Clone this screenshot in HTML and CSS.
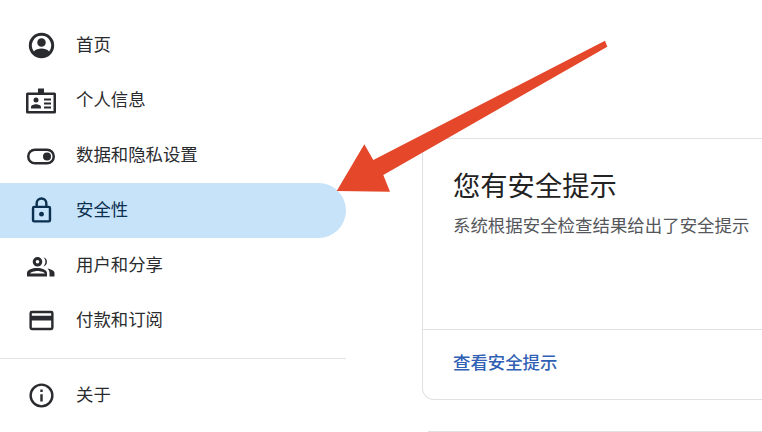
FILE: index.html
```html
<!DOCTYPE html>
<html lang="zh-CN">
<head>
    <meta charset="UTF-8">
    <meta name="viewport" content="width=device-width, initial-scale=1.0">
    <title>安全性</title>
    <link rel="stylesheet" href="styles.css">
</head>
<body>

    <div class="page">
        <!-- Sidebar -->
        <nav class="sidebar">
            <a class="nav-item">
                <svg class="nav-icon" viewBox="0 0 24 24"><path d="M12 1.500a10.500 10.500 0 1 0 0 21 10.500 10.500 0 0 0 0-21zM12 4a8 8 0 0 1 6.300 12.900C16.900 15.200 14.300 14.500 12 14.500s-4.900.7-6.300 2.400A8 8 0 0 1 12 4z"/><circle cx="12" cy="9.500" r="3.500"/></svg>
                <span>首页</span>
            </a>
            <a class="nav-item">
                <svg class="nav-icon nav-icon-wide" viewBox="0 0 30 26"><path d="M12 1h6v4h10.500a1.500 1.500 0 0 1 1.500 1.500v18a1.500 1.500 0 0 1-1.500 1.500h-27A1.500 1.500 0 0 1 0 24.500v-18A1.500 1.500 0 0 1 1.500 5H12zM2.500 7.500v16h25v-16z" fill-rule="evenodd"/><circle cx="10" cy="12.500" r="2.500"/><path d="M5 21v-1.500c0-1.800 3-2.800 5-2.800s5 1 5 2.800V21zM18 11h7v2h-7zM18 15h7v2h-7zM18 19h7v2h-7z"/></svg>
                <span>个人信息</span>
            </a>
            <a class="nav-item">
                <svg class="nav-icon nav-icon-wide" viewBox="0 0 30 18"><path d="M9 2h12a8 8 0 0 1 0 16H9A8 8 0 0 1 9 2zm0 2.500a5.500 5.500 0 0 0 0 11h12a5.500 5.500 0 0 0 0-11z" fill-rule="evenodd"/><circle cx="21" cy="10" r="4"/></svg>
                <span>数据和隐私设置</span>
            </a>
            <a class="nav-item active">
                <svg class="nav-icon" viewBox="0 0 24 24"><path d="M18 8h-1V6A5 5 0 0 0 7 6v2H6a2 2 0 0 0-2 2v10a2 2 0 0 0 2 2h12a2 2 0 0 0 2-2V10a2 2 0 0 0-2-2zM9 6a3 3 0 0 1 6 0v2H9zm9 14H6V10h12z"/><circle cx="12" cy="15" r="2"/></svg>
                <span>安全性</span>
            </a>
            <a class="nav-item">
                <svg class="nav-icon nav-icon-people" viewBox="0 0 28 20"><path d="M10.500 0a4.800 4.800 0 1 1 0 9.600 4.800 4.800 0 0 1 0-9.600zm0 3a1.800 1.800 0 1 0 0 3.600 1.800 1.800 0 0 0 0-3.600zM10.500 11c3.800 0 9.500 1.700 9.500 5v3.500H0V16c0-3.300 5.700-5 9.500-5zm0 3c-3 0-6.800 1.100-7.500 2.500h15c-.7-1.400-4.500-2.500-7.500-2.500z"/><path d="M16.500.2a4.800 4.800 0 0 1 0 9.200c1.200-1.300 1.900-2.800 1.900-4.600s-.7-3.300-1.900-4.600zM20.500 11.500c3.800.8 7 2.300 7 4.700v3.300h-5V16c0-1.800-.8-3.300-2-4.500z"/></svg>
                <span>用户和分享</span>
            </a>
            <a class="nav-item">
                <svg class="nav-icon" viewBox="0 0 24 24"><path d="M20 4H4a2 2 0 0 0-2 2v12a2 2 0 0 0 2 2h16a2 2 0 0 0 2-2V6a2 2 0 0 0-2-2zm0 14H4v-6h16zm0-10H4V6h16z"/></svg>
                <span>付款和订阅</span>
            </a>
            <hr class="nav-divider">
            <a class="nav-item">
                <svg class="nav-icon" viewBox="0 0 24 24"><path d="M12 2a10 10 0 1 0 0 20 10 10 0 0 0 0-20zm0 18a8 8 0 1 1 0-16 8 8 0 0 1 0 16zM11 11h2v6h-2zM11 7h2v2h-2z"/></svg>
                <span>关于</span>
            </a>
        </nav>

        <!-- Main content -->
        <main class="content">
            <section class="card">
                <div class="card-body">
                    <h2 class="card-title">您有安全提示</h2>
                    <p class="card-text">系统根据安全检查结果给出了安全提示</p>
                </div>
                <div class="card-footer">
                    <a class="card-link">查看安全提示</a>
                </div>
            </section>
            <div class="next-card"></div>
        </main>
    </div>

    <!-- Red annotation arrow -->
    <svg class="arrow" viewBox="0 0 762 432"><polygon points="605,40.700 607.300,46.700 383.300,175 390,191.700 336.700,191 364.300,144.300 373.300,160"/></svg>

</body>
</html>
```

FILE: styles.css
```css
body {
    font-family: "Liberation Sans", "Noto Sans CJK SC", sans-serif;
    background-color: #fff;
    color: #1f1f1f;
    margin: 0;
    height: 432px;
    overflow: hidden;
}

.page {
    display: flex;
    height: 432px;
}

.sidebar {
    width: 346px;
    flex-shrink: 0;
    padding-top: 18px;
    box-sizing: border-box;
}

.nav-item {
    display: flex;
    align-items: center;
    height: 55px;
    font-size: 17.4px;
    border-radius: 0 28px 28px 0;
    color: #2a2b2e;
}

.nav-item span {
    margin-bottom: 4px;
}

.nav-item.active {
    background-color: #c7e3fa;
    color: #0b2f4e;
}

.nav-icon {
    width: 29px;
    height: 29px;
    margin-left: 26.5px;
    margin-right: 20.5px;
    flex-shrink: 0;
    fill: currentColor;
}

.nav-icon-wide {
    width: 30px;
    margin-left: 26px;
    margin-right: 20px;
}

.nav-icon-people {
    width: 28px;
    height: 20px;
    margin-left: 27px;
    margin-right: 21px;
    margin-top: 2px;
}

.nav-divider {
    border: none;
    border-top: 1px solid #e2e3e5;
    margin: 10px 0 9px;
}

.content {
    flex: 1;
    min-width: 0;
    padding: 138px 0 0 76px;
}

.card {
    height: 262px;
    box-sizing: border-box;
    border: 1px solid #dfe1e4;
    border-right: none;
    border-radius: 12px 0 0 12px;
    display: flex;
    flex-direction: column;
}

.card-body {
    flex: 1;
    padding: 30px 0 0 30px;
}

.card-title {
    font-size: 27.3px;
    font-weight: 400;
    line-height: 36px;
    margin: 0;
    color: #222;
}

.card-text {
    font-size: 17.45px;
    line-height: 24px;
    margin: 9px 0 0;
    color: #55575b;
}

.card-footer {
    height: 70px;
    border-top: 1px solid #dfe1e4;
    padding: 21px 0 0 30px;
    box-sizing: border-box;
}

.card-link {
    font-size: 17.4px;
    line-height: 24px;
    font-weight: 500;
    color: #3060b4;
}

.next-card {
    height: 0;
    margin: 31px 0 0 6px;
    border-top: 1px solid #dfe1e4;
}

/* sits on top of the page, it is an annotation */
.arrow {
    position: absolute;
    top: 0;
    left: 0;
    width: 762px;
    height: 432px;
    fill: #e4472a;
}
```
